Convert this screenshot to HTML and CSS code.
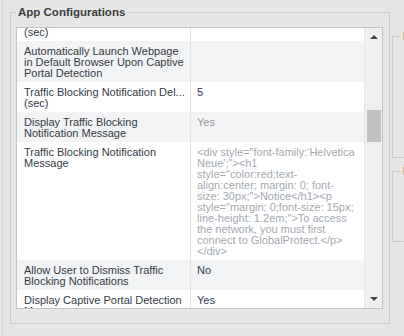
FILE: index.html
```html
<!DOCTYPE html>
<html>
  <head>
    <meta charset="utf-8">
    <title>App Configurations</title>
    <link rel="stylesheet" href="styles.css">
  </head>
  <body>
    <div class="page">
      <fieldset class="app">
        <legend>App Configurations</legend>
        <div class="grid">
          <div class="rows">
            <div class="inner">
              <div class="row top">
                <div class="name">(sec)</div>
                <div class="val"></div>
              </div>
              <div class="row alt">
                <div class="name">Automatically Launch Webpage<br>in Default Browser Upon Captive<br>Portal Detection</div>
                <div class="val"></div>
              </div>
              <div class="row">
                <div class="name">Traffic Blocking Notification Del...<br>(sec)</div>
                <div class="val">5</div>
              </div>
              <div class="row alt">
                <div class="name">Display Traffic Blocking<br>Notification Message</div>
                <div class="val grey">Yes</div>
              </div>
              <div class="row">
                <div class="name">Traffic Blocking Notification<br>Message</div>
                <div class="val code">&lt;div style="font-family:'Helvetica<br>Neue';"&gt;&lt;h1<br>style="color:red;text-<br>align:center; margin: 0; font-<br>size: 30px;"&gt;Notice&lt;/h1&gt;&lt;p<br>style="margin: 0;font-size: 15px;<br>line-height: 1.2em;"&gt;To access<br>the network, you must first<br>connect to GlobalProtect.&lt;/p&gt;<br>&lt;/div&gt;</div>
              </div>
              <div class="row alt">
                <div class="name">Allow User to Dismiss Traffic<br>Blocking Notifications</div>
                <div class="val">No</div>
              </div>
              <div class="row">
                <div class="name">Display Captive Portal Detection<br>Message</div>
                <div class="val">Yes</div>
              </div>
            </div>
          </div>
          <div class="scroll">
            <div class="arrow up"></div>
            <div class="track">
              <div class="thumb" style="margin-top: 64px"></div>
            </div>
            <div class="arrow down"></div>
          </div>
        </div>
      </fieldset>
      <div class="side">
        <fieldset class="box first">
          <legend>Portal</legend>
        </fieldset>
        <fieldset class="box second">
          <legend>Portal</legend>
        </fieldset>
      </div>
    </div>
  </body>
</html>
```

FILE: styles.css
```css
* {
  box-sizing: border-box;
}
html, body {
  margin: 0;
  padding: 0;
  background: #e6e6e6;
  overflow: hidden;
}
body {
  font-family: "Liberation Sans", Arial, sans-serif;
  font-size: 11px;
  color: #333;
  padding-left: 2px;
}
.page {
  display: flex;
  align-items: flex-start;
  height: 336px;
  width: 440px;
  border-left: 1px solid #d3d3d3;
  padding-left: 7px;
}
fieldset {
  margin: 0;
  border: 1px solid #cacaca;
}
legend {
  padding: 0 2px;
  font-size: 11.5px;
  font-weight: bold;
  line-height: 14px;
  color: #3d3d3d;
}
.app {
  flex: none;
  width: 380px;
  margin-top: 5px;
  padding: 8px 6px 14px 5px;
}
.grid {
  display: flex;
  height: 282px;
  border: 1px solid #c4c4c4;
  background: #fff;
}
.rows {
  width: 347px;
  overflow: hidden;
}
.inner {
  margin-top: -17px;
}
.row {
  display: flex;
  line-height: 11px;
}
.row.alt {
  background: #f2f3f5;
}
.name {
  width: 174px;
  padding: 5px 4px 3px 7px;
  border-right: 1px solid #e2e2e2;
  white-space: nowrap;
  color: #333a44;
}
.row.top .name {
  padding-top: 16px;
}
.val {
  flex: 1;
  padding: 5px 4px 3px 6px;
  white-space: nowrap;
  color: #2c3b50;
}
.val.grey {
  color: #9a9a9a;
}
.val.code {
  color: #a2a9b2;
}
.scroll {
  width: 18px;
  display: flex;
  flex-direction: column;
  background: #f0f0f0;
  border-left: 1px solid #e6e6e6;
}
.arrow {
  height: 18px;
  display: flex;
  align-items: center;
  justify-content: center;
}
.arrow::before {
  content: "";
  border-left: 4px solid transparent;
  border-right: 4px solid transparent;
}
.up::before {
  border-bottom: 4px solid #444;
}
.down::before {
  border-top: 4px solid #444;
}
.track {
  flex: 1;
}
.thumb {
  width: 14px;
  height: 32px;
  margin-left: 2px;
  background: #c1c1c1;
}
.side {
  margin-left: 2px;
  margin-top: 29px;
  display: flex;
  flex-direction: column;
  gap: 6px;
}
.box {
  width: 40px;
  padding: 0 6px 0 8px;
}
.first {
  height: 129px;
}
.second {
  height: 78px;
}
```
